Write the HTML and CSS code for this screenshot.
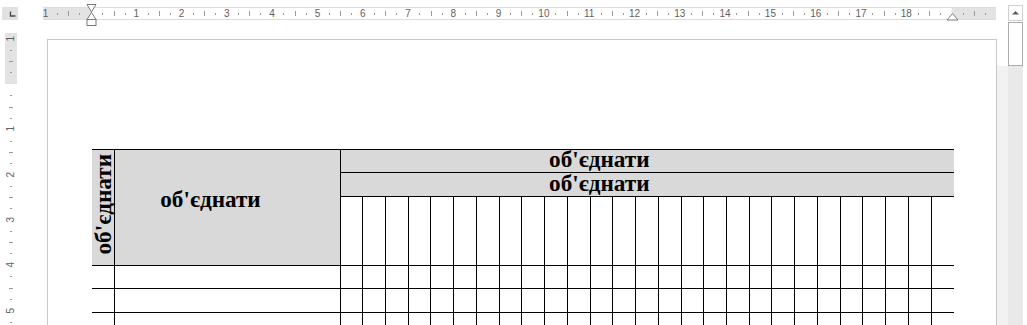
FILE: index.html
```html
<!DOCTYPE html>
<html>
<head>
  <meta charset="utf-8">
  <title>Документ</title>
  <link rel="stylesheet" href="styles.css">
</head>
<body>
  <div class="app">
    <div class="left-col">
      <div class="tab-box">
        <svg width="16" height="13" viewBox="0 0 16 13"><path d="M8.5 4.5v4.5h5" fill="none" stroke="#4d4d4d" stroke-width="1.4"/></svg>
      </div>
      <div class="vruler">
        <div class="vruler-track">
          <div class="vcm"><span>1</span></div>
          <div class="vcm"><span></span></div>
          <div class="vcm"><span>1</span></div>
          <div class="vcm"><span>2</span></div>
          <div class="vcm"><span>3</span></div>
          <div class="vcm"><span>4</span></div>
          <div class="vcm"><span>5</span></div>
        </div>
      </div>
    </div>

    <div class="doc-col">
      <div class="hruler">
        <div class="hruler-clip">
          <div class="hruler-track">
            <span class="cm">1</span><span class="cm"></span>
            <span class="cm">1</span><span class="cm">2</span><span class="cm">3</span><span class="cm">4</span><span class="cm">5</span><span class="cm">6</span>
            <span class="cm">7</span><span class="cm">8</span><span class="cm">9</span><span class="cm">10</span><span class="cm">11</span><span class="cm">12</span>
            <span class="cm">13</span><span class="cm">14</span><span class="cm">15</span><span class="cm">16</span><span class="cm">17</span><span class="cm">18</span>
            <span class="cm"></span><span class="cm"></span>
          </div>
        </div>
        <span class="indent-left">
          <svg width="11" height="23" viewBox="0 0 11 23">
            <polygon points="1,0.5 10,0.5 5.5,8" fill="#fff" stroke="#7b7b7b"/>
            <polygon points="5.5,8.5 10,15.5 1,15.5" fill="#fff" stroke="#7b7b7b"/>
            <rect x="1" y="15.5" width="9" height="6" fill="#fff" stroke="#7b7b7b"/>
          </svg>
        </span>
        <span class="indent-right">
          <svg width="13" height="8" viewBox="0 0 13 8"><polygon points="6.5,0.5 12,7 1,7" fill="#fff" stroke="#7b7b7b"/></svg>
        </span>
      </div>

      <div class="page">
        <table class="plan">
          <colgroup>
            <col class="col-side">
            <col class="col-title">
            <col class="col-day" span="27">
          </colgroup>
          <tr class="row-top">
            <td class="cell-side" rowspan="3"><span class="side-text">об'єднати</span></td>
            <td class="cell-title" rowspan="3">об'єднати</td>
            <td class="cell-band" colspan="27">об'єднати</td>
          </tr>
          <tr class="row-band">
            <td class="cell-band" colspan="27">об'єднати</td>
          </tr>
          <tr class="row-days">
            <td></td><td></td><td></td><td></td><td></td><td></td><td></td><td></td><td></td><td></td><td></td><td></td><td></td><td></td><td></td><td></td><td></td><td></td><td></td><td></td><td></td><td></td><td></td><td></td><td></td><td></td><td></td>
          </tr>
          <tr class="row-a">
            <td></td><td></td><td></td><td></td><td></td><td></td><td></td><td></td><td></td><td></td><td></td><td></td><td></td><td></td><td></td><td></td><td></td><td></td><td></td><td></td><td></td><td></td><td></td><td></td><td></td><td></td><td></td><td></td><td></td>
          </tr>
          <tr class="row-b">
            <td></td><td></td><td></td><td></td><td></td><td></td><td></td><td></td><td></td><td></td><td></td><td></td><td></td><td></td><td></td><td></td><td></td><td></td><td></td><td></td><td></td><td></td><td></td><td></td><td></td><td></td><td></td><td></td><td></td>
          </tr>
          <tr class="row-a">
            <td></td><td></td><td></td><td></td><td></td><td></td><td></td><td></td><td></td><td></td><td></td><td></td><td></td><td></td><td></td><td></td><td></td><td></td><td></td><td></td><td></td><td></td><td></td><td></td><td></td><td></td><td></td><td></td><td></td>
          </tr>
        </table>
      </div>
    </div>

    <div class="scrollbar">
      <div class="scroll-btn">
        <svg width="13" height="14" viewBox="0 0 13 14"><polygon points="6.5,5 10,8.5 3,8.5" fill="#5a5a5a"/></svg>
      </div>
      <div class="scroll-thumb"></div>
      <div class="scroll-track"></div>
    </div>
  </div>
</body>
</html>
```

FILE: styles.css
```css
body {
  margin: 0;
  padding: 0;
  background-color: #fff;
  font-family: 'Liberation Sans', Arial, sans-serif;
  overflow: hidden;
}

.app {
  display: flex;
  width: 1027px;
  height: 325px;
  overflow: hidden;
}

/* left column: tab selector + vertical ruler */
.left-col {
  flex: 0 0 43px;
  display: flex;
  flex-direction: column;
}

.tab-box {
  width: 16px;
  height: 13px;
  margin: 7px 0 0 2px;
  background-color: #e1e1e1;
}

.tab-box svg {
  display: block;
}

.vruler {
  flex: 1;
  width: 12px;
  margin: 13px 0 0 5px;
  overflow: hidden;
  background: linear-gradient(to bottom, #e3e3e3 0 51px, #fff 51px);
}

.vruler-track {
  display: flex;
  flex-direction: column;
  margin-top: -17px;
}

.vcm {
  flex: 0 0 45.3px;
  display: flex;
  align-items: center;
  justify-content: center;
  background:
    linear-gradient(#9a9a9a, #9a9a9a) 4px 0 / 4px 1px no-repeat,
    linear-gradient(#9a9a9a, #9a9a9a) 5px 11px / 2px 1px no-repeat,
    linear-gradient(#9a9a9a, #9a9a9a) 5px 34px / 2px 1px no-repeat;
}

.vcm span {
  font-size: 10px;
  line-height: 10px;
  color: #5f5f5f;
  writing-mode: vertical-rl;
  transform: rotate(180deg);
}

/* document column: ruler + page */
.doc-col {
  flex: 0 0 954px;
  display: flex;
  flex-direction: column;
}

.hruler {
  position: relative;
  width: 953px;
  height: 11px;
  margin-top: 7px;
  border-top: 1px solid #dcdcdc;
  border-bottom: 1px solid #dcdcdc;
  background: linear-gradient(to right, #e3e3e3 0 48px, #fff 48px 909px, #e3e3e3 909px);
}

.hruler-clip {
  height: 100%;
  overflow: hidden;
}

.hruler-track {
  display: flex;
  margin-left: -20px;
}

.cm {
  flex: 0 0 45.3px;
  height: 11px;
  text-align: center;
  font-size: 10px;
  line-height: 11px;
  color: #5f5f5f;
  background:
    linear-gradient(#9a9a9a, #9a9a9a) 0 3px / 1px 5px no-repeat,
    linear-gradient(#9a9a9a, #9a9a9a) 11px 5px / 1px 2px no-repeat,
    linear-gradient(#9a9a9a, #9a9a9a) 34px 5px / 1px 2px no-repeat;
}

.indent-left {
  position: absolute;
  left: 43px;
  top: -4px;
  line-height: 0;
}

.indent-right {
  position: absolute;
  left: 903px;
  top: 5px;
  line-height: 0;
}

.page {
  flex: 1;
  width: 950px;
  margin: 19px 0 0 4px;
  padding: 109px 0 0 44px;
  box-sizing: border-box;
  border: 1px solid #c8c8c8;
  border-bottom: none;
  background-color: #fff;
  overflow: hidden;
}

/* the table */
.plan {
  border-collapse: collapse;
  table-layout: fixed;
  width: 862px;
  font-family: 'Liberation Serif', 'Times New Roman', serif;
  font-weight: bold;
  font-size: 23.2px;
  color: #000;
}

.col-side {
  width: 22px;
}

.col-title {
  width: 226px;
}

.col-day {
  width: 22.74px;
}

.plan td {
  border: 1px solid #000;
  padding: 0;
  line-height: 22px;
}

.plan td:first-child {
  border-left: none;
}

.plan td:last-child {
  border-right: none;
}

.row-top {
  height: 23px;
}

.row-band {
  height: 24px;
}

.row-days {
  height: 69px;
}

.row-a {
  height: 23px;
}

.row-b {
  height: 24px;
}

.plan .cell-side,
.plan .cell-title,
.plan .cell-band {
  background-color: #d9d9d9;
  vertical-align: middle;
  text-align: center;
}

.plan .cell-side {
  padding-bottom: 4px;
}

.side-text {
  display: inline-block;
  writing-mode: vertical-rl;
  transform: rotate(180deg);
  line-height: 22px;
}

.plan .cell-title {
  padding-right: 33px;
  padding-bottom: 18px;
}

.plan .cell-band {
  padding-right: 96px;
  padding-bottom: 4px;
  line-height: 18px;
}

/* scrollbar */
.scrollbar {
  flex: 0 0 30px;
  display: flex;
  flex-direction: column;
}

.scroll-btn {
  width: 13px;
  height: 14px;
  margin: 5px 0 0 11px;
  border: 1px solid #d0d0d0;
  background-color: #fff;
}

.scroll-btn svg {
  display: block;
}

.scroll-thumb {
  width: 13px;
  height: 42px;
  margin: 1px 0 0 11px;
  border: 1px solid #ababab;
  background-color: #fff;
}

.scroll-track {
  flex: 1;
  background: linear-gradient(to right, #f2f2f2 0 11px, #e9e9e9 11px 26px, #fff 26px);
}
```
